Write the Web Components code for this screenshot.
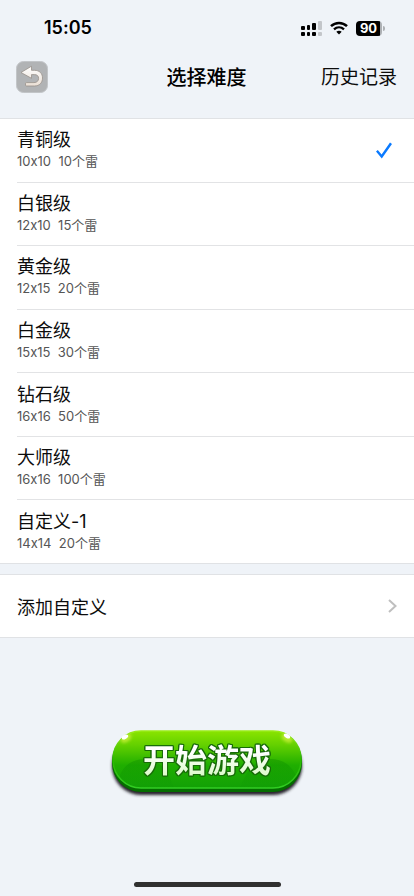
<!DOCTYPE html>
<html lang="zh-CN">
<head>
<meta charset="utf-8">
<meta name="viewport" content="width=device-width, initial-scale=1">
<title>选择难度</title>
<style>
  html { height: 100%; }
  body {
    margin: 0;
    min-height: 100%;
    display: grid;
    background: #eff3f8;
    color: #0c0c0c;
    font-family: Inter, "Noto Sans CJK SC", sans-serif;
    font-feature-settings: "calt" 0;
  }
</style>
</head>
<body>
<difficulty-screen></difficulty-screen>

<template id="status-bar">
  <style>
    :host { display: flex; align-items: center; justify-content: space-between; height: 56px; padding: 0 29px 0 44px; color: #000; }
    time { font-size: 18px; line-height: 24px; font-weight: 600; }
    .icons { display: flex; align-items: center; gap: 8px; }
    svg { display: block; }
    .battery { display: flex; align-items: center; gap: 1px; }
    .level { box-sizing: border-box; width: 26px; height: 15px; padding-right: 1px; border-radius: 4px; background: linear-gradient(90deg, #000 24px, #adb0b4 24px); color: #fff; font-size: 13px; line-height: 15px; font-weight: 700; text-align: center; }
    .cap { width: 2px; height: 5px; border-radius: 0 2px 2px 0; background: #adb0b4; }
  </style>
  <time>15:05</time>
  <div class="icons">
    <svg width="21" height="15" viewBox="0 0 21 15" aria-label="信号">
      <g fill="#000">
        <rect x="0" y="5" width="4" height="4" rx="1"/><rect x="6" y="4" width="3" height="5" rx="1"/><rect x="11" y="2" width="4" height="7" rx="1"/>
        <rect x="0" y="11" width="4" height="4" rx="1"/><rect x="6" y="11" width="3" height="4" rx="1"/><rect x="11" y="11" width="4" height="4" rx="1"/>
      </g>
      <g fill="#c3c6ca"><rect x="17" y="0" width="4" height="9" rx="1"/><rect x="17" y="11" width="4" height="4" rx="1"/></g>
    </svg>
    <svg width="18" height="14" viewBox="0 0 18 14" fill="none" stroke="#000" aria-label="无线网络">
      <path d="M1 5.1C5.5.8 12.500.8 17 5.100" stroke-width="2.500"/>
      <path d="M4 8.300C6.900 5.600 11.100 5.600 14 8.300" stroke-width="2.300"/>
      <path d="M9 13.500L6.300 10.700Q9 8.700 11.700 10.700Z" fill="#000" stroke="none"/>
    </svg>
    <div class="battery"><div class="level">90</div><div class="cap"></div></div>
  </div>
</template>

<template id="nav-bar">
  <style>
    :host { display: grid; grid-template-columns: 1fr auto 1fr; align-items: center; height: 42px; padding: 0 17px 20px 16px; }
    button { justify-self: start; padding: 0; border: 0; background: none; display: block; cursor: pointer; }
    svg { display: block; }
    h1 { margin: 0; padding-top: 2px; font-size: 20px; line-height: 28px; font-weight: 500; color: #000; }
    a { justify-self: end; padding-top: 2px; color: inherit; text-decoration: none; font-size: 19px; line-height: 28px; }
  </style>
  <button type="button" aria-label="返回">
    <svg width="32" height="32" viewBox="0 0 32 32">
      <defs><linearGradient id="cream" x1="0" y1="0" x2="0" y2="1"><stop stop-color="#fff"/><stop offset="1" stop-color="#eadfd5"/></linearGradient></defs>
      <rect x=".5" y=".5" width="31" height="31" rx="7" fill="#b1b3b5" stroke="#c2c5c8"/>
      <path d="M5 11.500L15.500 5.200V9.300H18.500C23.500 9.300 26.500 12.500 26.500 17C26.500 21.700 23.500 25 18.500 25H10.500Q9.500 25 9.500 24V22.600Q9.500 21.600 10.500 21.600H18C21 21.600 22.600 19.800 22.600 17.300C22.600 14.900 21 13.600 18.500 13.600H15.500V17.300Z" fill="url(#cream)" stroke="#98908a" stroke-width=".8" stroke-linejoin="round"/>
    </svg>
  </button>
  <h1><slot></slot></h1>
  <a href="#history"><slot name="action"></slot></a>
</template>

<template id="level-row">
  <style>
    :host { display: block; padding-bottom: 4px; }
    .name { font-size: 18px; line-height: 26px; }
    .detail { font-size: 13px; line-height: 16px; color: #555; white-space: pre; }
  </style>
  <div class="name"><slot name="name"></slot></div>
  <div class="detail"><slot name="detail"></slot></div>
</template>

<template id="level-list">
  <style>
    :host { display: block; background: #fff; border: solid #e0e2e5; border-width: 1px 0; }
    .levels { display: flex; flex-direction: column; min-height: 444px; margin: 0; padding: 0 0 0 17px; }
    label { flex: 1; display: flex; align-items: center; justify-content: space-between; padding-right: 20px; cursor: pointer; }
    label + label { border-top: 1px solid #e2e3e5; }
    input { appearance: none; width: 20px; height: 20px; margin: 0; background: none; }
    input:checked { background: #0a7aff; clip-path: path("M2 11.300L3.800 9.700L7.600 14.200L16 2.300L18 3.700L7.800 18.200Z"); }
  </style>
  <div class="levels" role="radiogroup" aria-label="难度"></div>
</template>

<template id="link-row">
  <style>
    :host { display: block; background: #fff; border: solid #e0e2e5; border-width: 1px 0; }
    a { display: flex; align-items: center; justify-content: space-between; min-height: 62px; padding: 0 17px; color: inherit; text-decoration: none; font-size: 18px; line-height: 26px; }
    span { padding-top: 3px; }
  </style>
  <a href="#custom"><span><slot></slot></span>
    <svg width="9" height="14" viewBox="0 0 9 14" fill="none" stroke="#bfbfbf" stroke-width="2"><path d="M1 1L7.500 7L1 13"/></svg>
  </a>
</template>

<template id="game-button">
  <style>
    :host { display: block; }
    button { display: grid; place-items: center; position: relative; overflow: visible; width: 190px; height: 64px; margin: 0; padding: 0; border: 0; background: none; font-family: "Noto Sans CJK SC", sans-serif; cursor: pointer; }
    svg { position: absolute; inset: -4px -6px auto; width: 202px; height: 76px; }
    span { position: relative; font-size: 32px; line-height: 44px; font-weight: 700; padding: 0 1px 8px; background: linear-gradient(#fff 30%, #d5f9c0 85%); background-clip: text; -webkit-background-clip: text; color: transparent; filter: drop-shadow(1px 0 #176b08) drop-shadow(-1px 0 #176b08) drop-shadow(0 1px #176b08) drop-shadow(0 -1px #176b08); }
  </style>
  <button type="button">
    <svg viewBox="0 0 202 76" aria-hidden="true">
      <defs>
        <linearGradient id="face" x1="0" y1="0" x2="0" y2="1"><stop stop-color="#8ae400"/><stop offset=".25" stop-color="#63d000"/><stop offset=".6" stop-color="#1fae00"/><stop offset="1" stop-color="#12a006"/></linearGradient>
        <radialGradient id="glow" cx=".5" cy="1" r=".5"><stop stop-color="#65d52f"/><stop offset="1" stop-color="#36bd17" stop-opacity="0"/></radialGradient>
        <linearGradient id="shade" x1="0" y1="0" x2="0" y2="1"><stop stop-color="#078400" stop-opacity=".35"/><stop offset="1" stop-color="#078b00" stop-opacity=".05"/></linearGradient>
        <linearGradient id="rim" x1="0" y1="0" x2="0" y2="1"><stop stop-color="#9aec18"/><stop offset=".5" stop-color="#2cb900"/><stop offset="1" stop-color="#31cd23"/></linearGradient>
        <filter id="soft" x="-10%" y="-20%" width="120%" height="150%"><feGaussianBlur stdDeviation="1.500"/></filter>
        <filter id="spark" x="-100%" y="-100%" width="300%" height="300%"><feGaussianBlur stdDeviation="1.500"/></filter>
        <clipPath id="shape"><rect x="7" y="5" width="188" height="57" rx="28"/></clipPath>
      </defs>
      <rect x="6" y="11" width="190" height="58" rx="29" fill="#25202b" filter="url(#soft)"/>
      <rect x="6" y="6" width="190" height="60" rx="29" fill="#056d00"/>
      <rect x="7" y="5" width="188" height="57" rx="28" fill="url(#face)"/>
      <g clip-path="url(#shape)">
        <path d="M11 62C13 43 22 34 38 33C54 34 62 44 68 62ZM134 62C141 43 150 33 164 33C180 33 191 43 193 62Z" fill="url(#shade)"/>
        <ellipse cx="101" cy="62" rx="82" ry="24" fill="url(#glow)"/>
      </g>
      <rect x="7" y="5" width="188" height="57" rx="28" fill="none" stroke="url(#rim)" stroke-width="1.500"/>
      <g clip-path="url(#shape)"><g filter="url(#spark)"><ellipse cx="20" cy="12" rx="6" ry="4" fill="#b5e92e" transform="rotate(-35 20 12)"/><ellipse cx="181" cy="12" rx="6" ry="4" fill="#b5e92e" transform="rotate(35 181 12)"/></g></g>
      <ellipse cx="19" cy="11" rx="3.500" ry="2" fill="#fff" transform="rotate(-30 19 11)"/><ellipse cx="181" cy="10" rx="3.500" ry="2" fill="#fff" transform="rotate(30 181 10)"/>
    </svg>
    <span><slot></slot></span>
  </button>
</template>

<template id="difficulty-screen">
  <style>
    :host { display: flex; flex-direction: column; min-height: 100%; }
    link-row { margin-top: 10px; }
    main { flex: 1; display: flex; flex-direction: column; }
    .start { display: flex; justify-content: center; padding-top: 92px; }
    footer { display: flex; justify-content: center; padding: 20px 0 9px; }
    .home { width: 147px; height: 5px; border-radius: 3px; background: #303030; }
  </style>
  <status-bar></status-bar>
  <nav-bar>选择难度<span slot="action">历史记录</span></nav-bar>
  <main>
    <level-list></level-list>
    <link-row>添加自定义</link-row>
    <div class="start"><game-button>开始游戏</game-button></div>
  </main>
  <footer><div class="home"></div></footer>
</template>

<script>
  class TemplateElement extends HTMLElement {
    constructor() {
      super();
      const template = document.getElementById(this.localName);
      this.attachShadow({ mode: "open" }).append(template.content.cloneNode(true));
    }
  }

  const levels = [
    ["青铜级", "10x10", "10个雷"],
    ["白银级", "12x10", "15个雷"],
    ["黄金级", "12x15", "20个雷"],
    ["白金级", "15x15", "30个雷"],
    ["钻石级", "16x16", "50个雷"],
    ["大师级", "16x16", "100个雷"],
    ["自定义-1", "14x14", "20个雷"]
  ];

  class LevelList extends TemplateElement {
    constructor() {
      super();
      this.shadowRoot.querySelector(".levels").innerHTML = levels.map(([name, size, mines], i) => `
        <label for="level-${i}">
          <level-row><span slot="name">${name}</span><span slot="detail">${size}  ${mines}</span></level-row>
          <input type="radio" name="level" id="level-${i}" value="${i}"${i === 0 ? " checked" : ""}>
        </label>`).join("");
    }
  }

  customElements.define("status-bar", class extends TemplateElement {});
  customElements.define("nav-bar", class extends TemplateElement {});
  customElements.define("level-row", class extends TemplateElement {});
  customElements.define("level-list", LevelList);
  customElements.define("link-row", class extends TemplateElement {});
  customElements.define("game-button", class extends TemplateElement {});
  customElements.define("difficulty-screen", class extends TemplateElement {});
</script>
</body>
</html>
